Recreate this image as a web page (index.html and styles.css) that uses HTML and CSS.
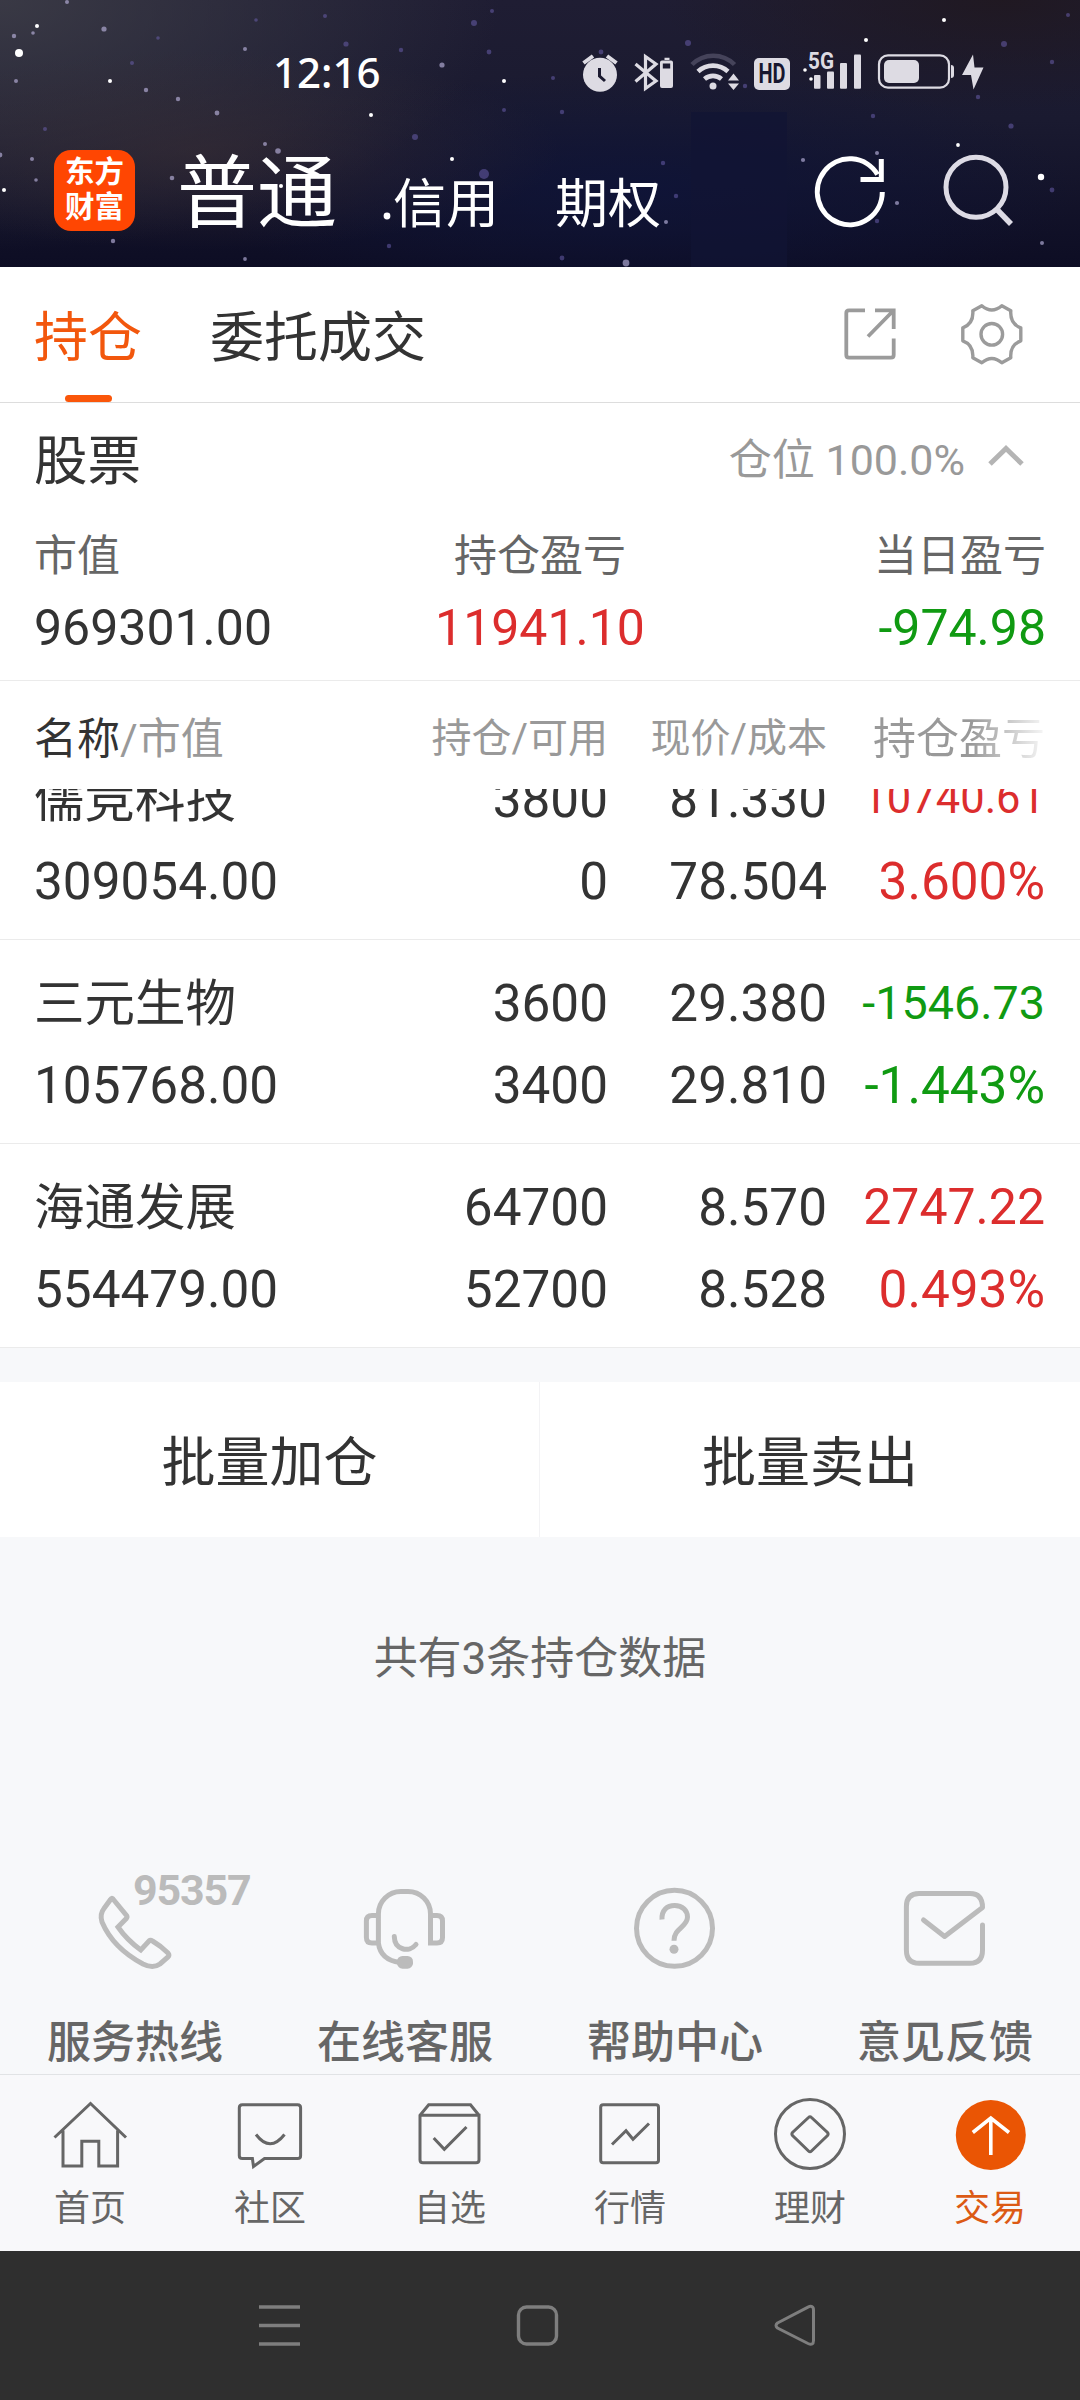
FILE: index.html
```html
<!DOCTYPE html>
<html lang="zh-CN">
<head>
<meta charset="utf-8">
<title>持仓</title>
<link rel="stylesheet" href="styles.css">
</head>
<body>
<div class="screen">
  <header class="hero">
    <svg class="sky" viewBox="0 0 1080 267" aria-hidden="true">
      <rect x="691" y="112" width="96" height="155" fill="#111434" opacity=".75"/>
      <g fill="#fff">
        <circle cx="19" cy="53" r="4"/><circle cx="37" cy="26" r="2"/><circle cx="110" cy="81" r="2"/><circle cx="4" cy="190" r="2"/>
        <circle cx="371" cy="115" r="2"/><circle cx="504" cy="81" r="2"/><circle cx="452" cy="159" r="2"/><circle cx="387" cy="216" r="3.4"/>
        <circle cx="281" cy="186" r="2"/><circle cx="944" cy="20" r="2"/><circle cx="866" cy="40" r="2"/><circle cx="805" cy="70" r="1.8"/>
        <circle cx="811" cy="79" r="1.8"/><circle cx="958" cy="145" r="1.9"/><circle cx="1041" cy="177" r="3.2"/>
      </g>
      <g fill="#b9b2dc" opacity=".65">
        <circle cx="104" cy="29" r="2.6"/><circle cx="178" cy="99" r="2.2"/><circle cx="217" cy="113" r="2.4"/><circle cx="146" cy="90" r="2.2"/>
        <circle cx="113" cy="241" r="2.2"/><circle cx="245" cy="259" r="1.9"/><circle cx="245" cy="49" r="2"/><circle cx="14" cy="36" r="2.2"/>
        <circle cx="33" cy="33" r="1.8"/><circle cx="16" cy="81" r="2"/><circle cx="172" cy="178" r="2.3"/><circle cx="32" cy="159" r="2"/>
        <circle cx="36" cy="180" r="1.8"/><circle cx="278" cy="151" r="2.8"/><circle cx="265" cy="144" r="2"/><circle cx="626" cy="263" r="3.4"/>
        <circle cx="666" cy="222" r="2"/><circle cx="803" cy="160" r="2.1"/><circle cx="877" cy="153" r="2"/><circle cx="897" cy="203" r="2.1"/>
        <circle cx="1042" cy="243" r="2"/><circle cx="442" cy="65" r="2.6"/><circle cx="0" cy="155" r="2.4"/><circle cx="67" cy="2" r="2"/>
      </g>
      <g fill="#6f63b4" opacity=".5">
        <circle cx="484" cy="174" r="5"/><circle cx="474" cy="23" r="3"/><circle cx="346" cy="44" r="2.6"/><circle cx="401" cy="50" r="2.2"/>
        <circle cx="489" cy="52" r="2.4"/><circle cx="415" cy="137" r="3"/><circle cx="688" cy="43" r="3"/><circle cx="601" cy="52" r="2.4"/>
        <circle cx="745" cy="86" r="2.2"/><circle cx="562" cy="112" r="2.2"/><circle cx="663" cy="163" r="2.2"/><circle cx="676" cy="196" r="2.2"/>
        <circle cx="1004" cy="44" r="3"/><circle cx="1052" cy="62" r="2.2"/><circle cx="978" cy="97" r="2.2"/><circle cx="1011" cy="126" r="2.6"/>
        <circle cx="873" cy="116" r="2.2"/><circle cx="1052" cy="190" r="2.4"/><circle cx="877" cy="221" r="2.2"/><circle cx="45" cy="129" r="2"/>
        <circle cx="132" cy="63" r="2"/><circle cx="158" cy="38" r="1.8"/><circle cx="256" cy="20" r="1.8"/><circle cx="325" cy="16" r="2"/>
        <circle cx="562" cy="258" r="2.4"/><circle cx="389" cy="246" r="2.2"/><circle cx="504" cy="110" r="2"/><circle cx="492" cy="11" r="2"/>
        <circle cx="1068" cy="15" r="2"/><circle cx="553" cy="78" r="2"/>
      </g>
    </svg>
    <div class="status">
      <time class="clock">12:16</time>
      <svg class="status-icons" viewBox="580 46 410 50" width="410" height="50" fill="#dddbe3" aria-hidden="true">
        <circle cx="600" cy="74.7" r="17"/>
        <path d="M583.5 63 L593 56 M616.5 63 L607 56" stroke="#dddbe3" stroke-width="4" fill="none"/>
        <path d="M599.5 68 V76 L605 81" stroke="#1b1a30" stroke-width="3" fill="none"/>
        <path d="M635.5 64 L656 81 L645.500 88.500 V56.500 L656 64 L635.500 81.500" stroke="#dddbe3" stroke-width="3.200" fill="none"/>
        <path d="M664.500 57.700 h5 v2.300 h-5z M662 60.500 h9 a2 2 0 0 1 2 2 v23.500 a2 2 0 0 1 -2 2 h-9 a2 2 0 0 1 -2-2 v-23.500 a2 2 0 0 1 2-2z M662.800 63.500 v5 h7.400 v-5z" fill-rule="evenodd"/>
        <g fill="none" stroke="#dddbe3" stroke-width="4.600">
          <path d="M692 64.500 A30 30 0 0 1 734.500 64.500" stroke="#45435a"/>
          <path d="M698 71.500 A22 22 0 0 1 728 71.500"/>
          <path d="M704.500 79 A13 13 0 0 1 721.500 79"/>
        </g>
        <circle cx="713" cy="86" r="3.500"/>
        <path d="M728 80.500 L733.500 73.500 L739 80.500z M728 83.500 L733.500 90 L739 83.500z"/>
        <rect x="754" y="58" width="36" height="32" rx="5"/>
        <text class="hd" x="772" y="83" textLength="27" lengthAdjust="spacingAndGlyphs">HD</text>
        <text class="fiveg" x="808" y="69" textLength="26" lengthAdjust="spacingAndGlyphs">5G</text>
        <rect x="814" y="75" width="6.500" height="13.700" rx="1"/><rect x="827" y="71.500" width="7" height="17.200" rx="1"/>
        <rect x="840" y="63" width="7" height="25.700" rx="1"/><rect x="854" y="54.500" width="7" height="34.200" rx="1"/>
        <rect x="879" y="55.300" width="70" height="32.400" rx="9" fill="none" stroke="#dddbe3" stroke-width="2.200"/>
        <rect x="884" y="60" width="35" height="23" rx="5"/>
        <path d="M951 65 q3 0 3 3 v7 q0 3 -3 3z"/>
        <path d="M973 54.500 L962 75 L971 75 L973.500 89.500 L983.500 67.500 L974.500 67.500z"/>
      </svg>
    </div>
    <nav class="accounts">
      <div class="logo"><span>东方</span><span>财富</span></div>
      <span class="account account-on">普通</span>
      <span class="account">信用</span>
      <span class="account">期权</span>
      <svg class="hero-icons" viewBox="810 150 210 84" width="210" height="84" fill="none" stroke-width="5" aria-hidden="true">
        <path d="M882.300 192 A32.500 33 0 1 1 877.500 174.500" stroke="#fff"/>
        <path d="M881.300 159 V179.500 H860.500" stroke="#fff" stroke-width="5"/>
        <circle cx="976" cy="187.300" r="30" stroke="#dddbe5"/>
        <path d="M996.500 209 L1011 224" stroke="#dddbe5" stroke-width="5.500"/>
      </svg>
    </nav>
  </header>

  <nav class="tabs">
    <span class="tab tab-on">持仓</span>
    <span class="tab">委托成交</span>
    <svg class="tab-icons" viewBox="840 300 190 70" width="190" height="70" fill="none" stroke="#9b9b9b" stroke-width="3.800" aria-hidden="true">
      <path d="M865 310.300 H849 Q846.300 310.300 846.300 313 V355 Q846.300 357.700 849 357.700 H891 Q893.700 357.700 893.700 355 V338.500"/>
      <path d="M875 310.300 H893.700 V329 M893 311 L868 336.500"/>
      <g transform="translate(991.800 334.300)" stroke-linejoin="round" stroke-width="3.400">
        <path d="M-10 -28.500 Q0 -20 10 -28.500 L19 -23.500 Q18 -10.500 29 -6.500 V6.500 Q18 10.500 19 23.500 L10 28.500 Q0 20 -10 28.500 L-19 23.500 Q-18 10.500 -29 6.500 V-6.500 Q-18 -10.500 -19 -23.500 Z"/>
        <circle r="10.800"/>
      </g>
    </svg>
  </nav>

  <section class="summary">
    <div class="summary-head">
      <h2 class="title">股票</h2>
      <span class="position">仓位 100.0%</span>
      <svg class="chevron" viewBox="0 0 38 24" width="38" height="24" aria-hidden="true"><path d="M3 20 L19 4.500 L35 20" fill="none" stroke="#b4b4b4" stroke-width="5"/></svg>
    </div>
    <div class="stats">
      <div class="stat"><span class="stat-label">市值</span><span class="stat-value">969301.00</span></div>
      <div class="stat stat-mid"><span class="stat-label">持仓盈亏</span><span class="stat-value up">11941.10</span></div>
      <div class="stat stat-end"><span class="stat-label">当日盈亏</span><span class="stat-value down">-974.98</span></div>
    </div>
  </section>

  <section class="holdings">
    <div class="grid columns">
      <span class="col-name"><b>名称</b>/市值</span><span>持仓/可用</span><span>现价/成本</span><span class="col-fade">持仓盈亏</span>
    </div>
    <div class="list">
      <div class="grid row">
        <span class="name stock">儒竞科技</span><span>3800</span><span>81.330</span><span class="up fit-s">10740.61</span>
        <span class="name">309054.00</span><span>0</span><span>78.504</span><span class="up">3.600%</span>
      </div>
      <div class="grid row">
        <span class="name stock">三元生物</span><span>3600</span><span>29.380</span><span class="down fit-m">-1546.73</span>
        <span class="name">105768.00</span><span>3400</span><span>29.810</span><span class="down">-1.443%</span>
      </div>
      <div class="grid row">
        <span class="name stock">海通发展</span><span>64700</span><span>8.570</span><span class="up fit-l">2747.22</span>
        <span class="name">554479.00</span><span>52700</span><span>8.528</span><span class="up">0.493%</span>
      </div>
    </div>
  </section>

  <div class="actions"><span class="action">批量加仓</span><span class="action">批量卖出</span></div>
  <p class="count">共有3条持仓数据</p>

  <section class="services">
    <div class="service">
      <svg viewBox="0 1860 270 120" width="270" height="120" aria-hidden="true">
        <path d="M113 1899 L126.500 1915.500 Q127.500 1917 126.500 1918.300 L118 1927 Q127 1940 140.800 1950 L149 1941 Q150.500 1939.700 152.500 1941 Q161 1946 168 1953 Q169.700 1955 168 1957 L160 1964 Q153 1969 143 1964 Q113 1948 102 1922 Q99.500 1914 104 1908.500 L110.500 1899.500 Q111.700 1897.500 113 1899Z"/>
        <text class="hotline" x="133" y="1904.500">95357</text>
      </svg>
      <span>服务热线</span>
    </div>
    <div class="service">
      <svg viewBox="270 1860 270 120" width="270" height="120" aria-hidden="true">
        <path d="M378.400 1943 V1914 A22.500 22.500 0 0 1 401 1891.500 H408 A22.500 22.500 0 0 1 430.500 1914 V1943 H437 Q442.500 1943 442.500 1937.500 V1921 Q442.500 1915.500 437 1915.500 H430.500 M378.400 1915.500 H372 Q366.400 1915.500 366.400 1921 V1937.500 Q366.400 1943 372 1943 H378.400 Q380.500 1960 400 1962.500"/>
        <path d="M394.300 1936.500 C394.500 1950 409 1953 416 1944.500" stroke-linecap="round"/>
        <rect x="397" y="1956" width="16" height="12.700" rx="5.500" class="solid"/>
      </svg>
      <span>在线客服</span>
    </div>
    <div class="service">
      <svg viewBox="540 1860 270 120" width="270" height="120" aria-hidden="true">
        <circle cx="674.500" cy="1928.300" r="38"/>
        <path d="M662 1919.500 C661.500 1910 667 1905.500 674.700 1905.500 C682.500 1905.500 687.500 1910.500 687.500 1917 C687.500 1927 674 1928 674 1940.700"/>
        <circle cx="674" cy="1949.300" r="4.500" class="solid"/>
      </svg>
      <span>帮助中心</span>
    </div>
    <div class="service">
      <svg viewBox="810 1860 270 120" width="270" height="120" aria-hidden="true">
        <path d="M982.500 1925 V1950 Q982.500 1963.300 970 1963.300 H919 Q906.400 1963.300 906.400 1950 V1906.500 Q906.400 1893.500 919 1893.500 H970 Q982.500 1893.500 982.500 1907.500 L944.600 1936.500 L923.500 1920" stroke-linecap="round" stroke-linejoin="round"/>
      </svg>
      <span>意见反馈</span>
    </div>
  </section>

  <nav class="tabbar">
    <div class="item">
      <svg viewBox="40 2095 100 80" width="100" height="80" aria-hidden="true"><path d="M54.500 2137.500 L90.500 2103.500 L126 2137.500 M63 2130.500 V2166 H81.800 V2141.300 H98.800 V2166 H117.600 V2130.500"/></svg>
      <span>首页</span>
    </div>
    <div class="item">
      <svg viewBox="220 2095 100 80" width="100" height="80" aria-hidden="true"><path d="M242.300 2104.700 H297.600 Q300.600 2104.700 300.600 2107.700 V2155.700 Q300.600 2158.500 297.600 2158.500 H264.500 L253.500 2166.500 L252.400 2158.500 H242.300 Q239.300 2158.500 239.300 2155.700 V2107.700 Q239.300 2104.700 242.300 2104.700Z M256 2134.500 Q270 2153 284.500 2134.500"/></svg>
      <span>社区</span>
    </div>
    <div class="item">
      <svg viewBox="400 2095 100 80" width="100" height="80" aria-hidden="true"><path d="M420 2115.300 H479 V2159.700 Q479 2162.700 476 2162.700 H423 Q420 2162.700 420 2159.700 V2115.300 L428.700 2104.700 H470.500 L479 2115.300 M433.700 2138 L444.300 2149.300 L466.500 2127"/></svg>
      <span>自选</span>
    </div>
    <div class="item">
      <svg viewBox="580 2095 100 80" width="100" height="80" aria-hidden="true"><rect x="600.700" y="2104.700" width="57.800" height="58" rx="2.500"/><path d="M612 2144.500 L626 2130.700 L633 2139.300 L649 2123.500"/></svg>
      <span>行情</span>
    </div>
    <div class="item">
      <svg viewBox="760 2095 100 80" width="100" height="80" aria-hidden="true"><circle cx="810" cy="2134" r="34.500"/><path d="M808.500 2117.500 Q810 2116 811.500 2117.500 L827.500 2132.500 Q828.700 2134 827.500 2135.500 L811.500 2151 Q810 2152.500 808.500 2151 L792.500 2135.500 Q791.300 2134 792.500 2132.500Z"/></svg>
      <span>理财</span>
    </div>
    <div class="item item-on">
      <svg viewBox="940 2095 100 80" width="100" height="80" aria-hidden="true"><circle cx="990.800" cy="2135" r="35" fill="#ea5504" stroke="none"/><path d="M990.800 2155 V2118 M972.800 2132.500 L990.800 2118 L1009 2132.500" stroke="#fff" stroke-width="3.600"/></svg>
      <span>交易</span>
    </div>
  </nav>

  <footer class="sysnav">
    <svg viewBox="0 2251 1080 149" width="1080" height="149" fill="none" stroke="#7e7e7e" stroke-width="3.400" aria-hidden="true">
      <path d="M259 2307 H300 M259 2325.500 H300 M259 2344 H300"/>
      <rect x="518.500" y="2307" width="38" height="37" rx="8"/>
      <path d="M777.500 2323 L807.500 2307.300 Q813.500 2304.500 813.500 2310 V2340.500 Q813.500 2346 808 2343.500 L777.500 2328 Q774.500 2325.500 777.500 2323Z" stroke-width="3"/>
    </svg>
  </footer>
</div>
</body>
</html>
```
FILE: styles.css
```css
* { box-sizing: border-box; }

body {
  margin: 0;
  background: #f7f8fa;
  color: #333;
  font-family: Roboto, "Noto Sans CJK SC", sans-serif;
}

.screen {
  width: 1080px;
  height: 2400px;
  display: flex;
  flex-direction: column;
  overflow: hidden;
}

.up { color: #dc2d2d; }
.down { color: #109a12; }

/* Header */
.hero {
  position: relative;
  height: 267px;
  background:
    radial-gradient(ellipse 360px 100px at 200px 150px, rgba(58, 46, 52, .55), transparent),
    radial-gradient(ellipse 500px 250px at 0 0, rgba(62, 62, 72, .85), transparent),
    radial-gradient(ellipse 340px 110px at 1000px 0, rgba(32, 24, 32, .9), transparent),
    radial-gradient(ellipse 440px 120px at 640px 190px, rgba(14, 20, 58, .8), transparent),
    linear-gradient(#1f1d33, #1a1a30 45%, #0d0d24);
}

.sky {
  position: absolute;
  inset: 0;
}

.status {
  position: relative;
  display: flex;
  justify-content: space-between;
  height: 96px;
  padding: 46px 90px 0 273px;
}

.clock {
  color: #fff;
  font: 500 42px/51px "Noto Sans", sans-serif;
}

.hd {
  font: 700 27px Roboto, sans-serif;
  fill: #17162e;
  text-anchor: middle;
}

.fiveg { font: 700 24px Roboto, sans-serif; }

.accounts {
  position: relative;
  display: flex;
  align-items: flex-end;
  height: 138px;
  padding: 0 60px 0 54px;
  color: #fff;
}

.logo {
  width: 81px;
  height: 81px;
  margin: 0 42px 3px 0;
  padding-top: 5px;
  border-radius: 17px;
  background: #ff4602;
  display: flex;
  flex-direction: column;
  align-items: center;
  font-size: 29.500px;
  font-weight: 700;
  line-height: 35px;
}

.account {
  margin-left: 56px;
  font-size: 53px;
  line-height: 57px;
}

.account-on {
  margin-left: 0;
  font-size: 80px;
  line-height: 80px;
}

.hero-icons { margin-left: auto; }

/* Tabs */
.tabs {
  display: flex;
  height: 136px;
  padding: 0 50px 0 34px;
  border-bottom: 1px solid #ddd;
  background: #fff;
}

.tab {
  position: relative;
  margin-right: 68px;
  padding-top: 5px;
  font-size: 54px;
  line-height: 134px;
}

.tab-on { color: #f2570d; }

.tab-on::after {
  content: "";
  position: absolute;
  left: 31px;
  bottom: 0;
  width: 47px;
  height: 7px;
  border-radius: 4px;
  background: #fa560a;
}

.tab-icons { margin: 33px 0 0 auto; }

/* Summary */
.summary {
  height: 278px;
  padding: 0 34px;
  border-bottom: 1px solid #ebebeb;
  background: #fff;
}

.summary-head {
  display: flex;
  align-items: center;
  height: 114px;
  padding: 0 21px 8px 0;
}

.title {
  margin: 0 auto 0 0;
  font-size: 53.500px;
  font-weight: 400;
}

.position {
  margin-right: 22px;
  color: #999;
  font-size: 43px;
}

.chevron { margin-bottom: 0; }

.stats {
  display: grid;
  grid-template-columns: 1fr 1fr 1fr;
}

.stat {
  display: flex;
  flex-direction: column;
}

.stat-mid { align-items: center; }
.stat-end { align-items: flex-end; }

.stat-label {
  color: #666;
  font-size: 43px;
  line-height: 79px;
}

.stat-value {
  font-size: 50px;
  line-height: 65px;
}

/* Holdings */
.holdings { background: #fff; }

.grid {
  display: grid;
  grid-template-columns: 360px 214px 219px 218px;
  padding: 0 35px 0 34px;
  text-align: right;
}

.columns {
  height: 108px;
  padding-top: 4px;
  align-items: center;
  color: #999;
  font-size: 40px;
  line-height: 108px;
}

.col-name {
  font-size: 43px;
  text-align: left;
}

.col-name b {
  color: #333;
  font-weight: 400;
}

.col-fade {
  margin-top: -1px;
  font-size: 43px;
  background: linear-gradient(90deg, #999 66%, #f4f4f4 99%);
  -webkit-background-clip: text;
  background-clip: text;
  color: transparent;
}

.list {
  height: 559px;
  overflow: hidden;
}

.row {
  height: 204px;
  padding-top: 23px;
  grid-template-rows: 82px 82px;
  border-bottom: 1px solid #ebebeb;
  font-size: 51.300px;
  line-height: 82px;
}

.row:first-child { margin-top: -53px; }

.row .name { text-align: left; }
.row .stock { font-size: 50.500px; }
.row .fit-s { font-size: 43.500px; line-height: 80px; }
.row .fit-m { font-size: 46.700px; line-height: 80px; }
.row .fit-l { font-size: 50px; line-height: 80px; }

/* Batch actions */
.actions {
  display: flex;
  height: 155px;
  margin-top: 34px;
  background: #fff;
}

.action {
  width: 540px;
  padding-top: 4px;
  font-size: 54px;
  line-height: 155px;
  text-align: center;
}

.action:first-child { border-right: 1px solid #f3f3f5; }

.count {
  margin: 91px 0 0;
  color: #666;
  font-size: 44px;
  line-height: 62px;
  text-align: center;
}

/* Services */
.services {
  display: grid;
  grid-template-columns: repeat(4, 1fr);
  height: 214px;
  margin-top: 170px;
}

.service {
  display: flex;
  flex-direction: column;
  align-items: center;
  color: #666;
  font-size: 44px;
  font-weight: 500;
  line-height: 60px;
}

.service svg {
  margin-bottom: 33px;
  fill: none;
  stroke: #bbb;
  stroke-width: 5;
}

.service .solid { fill: #bbb; stroke: none; }

.service .hotline {
  fill: #bbb;
  stroke: none;
  font: 700 43px Roboto, sans-serif;
  letter-spacing: -1.200px;
}

/* Bottom bar */
.tabbar {
  display: grid;
  grid-template-columns: repeat(6, 1fr);
  height: 177px;
  padding-top: 20px;
  border-top: 1px solid #e1e3e5;
  background: #f8f8fa;
}

.item {
  display: flex;
  flex-direction: column;
  align-items: center;
  color: #666;
  font-size: 36px;
  line-height: 44px;
}

.item svg {
  margin-bottom: 12px;
  fill: none;
  stroke: #666;
  stroke-width: 3;
}

.item-on { color: #dc5a14; }

.sysnav {
  height: 149px;
  background: #2f2f2f;
}
```
